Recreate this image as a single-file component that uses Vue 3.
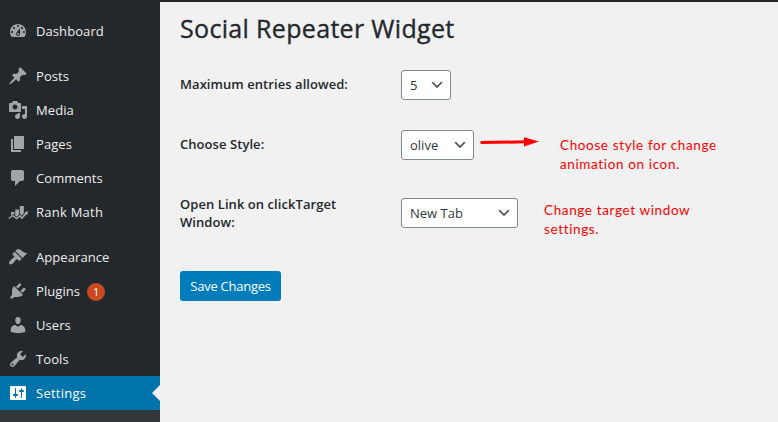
<script setup>
const groups = [
  [
    {
      id: 'dashboard',
      label: 'Dashboard',
      path: 'M3.76 16h12.48c1.1-1.37 1.76-3.11 1.76-5 0-4.42-3.58-8-8-8s-8 3.58-8 8c0 1.89.66 3.63 1.76 5zM10 4c.55 0 1 .45 1 1s-.45 1-1 1-1-.45-1-1 .45-1 1-1zM6 6c.55 0 1 .45 1 1s-.45 1-1 1-1-.45-1-1 .45-1 1-1zm8 0c.55 0 1 .45 1 1s-.45 1-1 1-1-.45-1-1 .45-1 1-1zm-5.37 5.55L12 7v6c0 1.1-.9 2-2 2s-2-.9-2-2c0-.57.24-1.08.63-1.45zM4 10c.55 0 1 .45 1 1s-.45 1-1 1-1-.45-1-1 .45-1 1-1zm12 0c.55 0 1 .45 1 1s-.45 1-1 1-1-.45-1-1 .45-1 1-1zm-5 3c0-.55-.45-1-1-1s-1 .45-1 1 .45 1 1 1 1-.45 1-1z',
    },
  ],
  [
    {
      id: 'posts',
      label: 'Posts',
      path: 'M10.44 3.02l1.82-1.82 6.36 6.35-1.83 1.82c-1.05-.68-2.48-.57-3.41.36l-.75.75c-.92.93-1.04 2.35-.35 3.41l-1.83 1.82-2.41-2.41-2.8 2.79c-.42.42-3.38 2.71-3.8 2.29s1.86-3.39 2.28-3.81l2.79-2.79L4.1 9.36l1.83-1.82c1.05.69 2.48.57 3.4-.36l.75-.75c.93-.92 1.05-2.35.36-3.41z',
    },
    {
      id: 'media',
      label: 'Media',
      path: 'M13 11V4c0-.55-.45-1-1-1h-1.67L9 1H5L3.67 3H2c-.55 0-1 .45-1 1v7c0 .55.45 1 1 1h10c.55 0 1-.45 1-1zM7 4.5c1.38 0 2.5 1.12 2.5 2.5S8.38 9.5 7 9.5 4.5 8.38 4.5 7 5.62 4.5 7 4.5zM14 6h5v10.5c0 1.38-1.12 2.5-2.5 2.5S14 17.88 14 16.5s1.12-2.5 2.5-2.5c.17 0 .34.02.5.05V9h-3V6zm-4 8.05V13h2v3.5c0 1.38-1.12 2.5-2.5 2.5S7 17.88 7 16.5 8.12 14 9.5 14c.17 0 .34.02.5.05z',
    },
    { id: 'pages', label: 'Pages', path: 'M6 15V2h10v13H6zm-1 1h8v2H3V5h2v11z' },
    {
      id: 'comments',
      label: 'Comments',
      path: 'M5 2h9c1.1 0 2 .9 2 2v7c0 1.1-.9 2-2 2h-2l-5 5v-5H5c-1.1 0-2-.9-2-2V4c0-1.1.9-2 2-2z',
    },
    {
      id: 'rank-math',
      label: 'Rank Math',
      path: 'M3 10h3.4v3.2L4.7 12 3 13.6zM7.2 7.4h3.8v5.2l-2.2 2.2-1.6-1.1zM11.8 4h4v7.2l-2 2.6-2-2.3zM.3 16l4.3-3.2 4.2 3 2.9-3 2.2 2.3 3.3-4.3-1-.6 3.8-.9-.5 3.7-1-.8-4.5 5-2.4-2.2-2.7 2.5-4.3-2.9-3.4 2.4z',
    },
  ],
  [
    {
      id: 'appearance',
      label: 'Appearance',
      path: 'M14.48 11.06L7.41 3.99l1.5-1.5c.5-.56 2.3-.47 3.51.32 1.21.8 1.43 1.28 2.91 2.1 1.18.64 2.45 1.26 4.45.85zm-.71.71L6.7 4.7 4.93 6.47c-.39.39-.39 1.02 0 1.41l1.06 1.06c.39.39.39 1.03 0 1.42-.6.6-1.43 1.11-2.21 1.69-.35.26-.7.53-1.01.84C1.43 14.23.4 16.08 1.4 17.07c.99 1 2.84-.03 4.18-1.36.31-.31.58-.66.85-1.02.57-.78 1.08-1.61 1.69-2.21.39-.39 1.02-.39 1.41 0l1.06 1.06c.39.39 1.02.39 1.41 0z',
    },
    {
      id: 'plugins',
      label: 'Plugins',
      badge: 1,
      path: 'M13.11 4.36L9.87 7.6 8 5.73l3.24-3.24c.35-.34 1.05-.2 1.56.32.52.51.66 1.21.31 1.55zm-8 1.77l.91-1.12 9.01 9.01-1.19.84c-.71.71-2.63 1.16-3.82 1.16H6.14L4.9 17.26c-.59.59-1.54.59-2.12 0-.59-.58-.59-1.53 0-2.12l1.24-1.24v-3.88c0-1.13.4-3.19 1.09-3.89zm7.26 3.97l3.24-3.24c.34-.35 1.04-.21 1.55.31.52.51.66 1.21.31 1.55l-3.24 3.25z',
    },
    {
      id: 'users',
      label: 'Users',
      path: 'M10 9.25c-2.27 0-2.73-3.44-2.73-3.44C7 4.02 7.82 2 9.97 2c2.16 0 2.98 2.02 2.71 3.81 0 0-.41 3.44-2.68 3.44zm0 2.57L12.72 10c2.39 0 4.52 2.33 4.52 4.53v2.49s-3.65 1.13-7.24 1.13c-3.65 0-7.24-1.13-7.24-1.13v-2.49c0-2.25 1.94-4.48 4.47-4.48z',
    },
    {
      id: 'tools',
      label: 'Tools',
      path: 'M16.68 9.77c-1.34 1.34-3.3 1.67-4.95.99l-5.41 6.52c-.99.99-2.59.99-3.58 0s-.99-2.59 0-3.57l6.52-5.42c-.68-1.65-.35-3.61.99-4.95 1.28-1.28 3.12-1.62 4.72-1.06l-2.89 2.89 2.82 2.82 2.86-2.87c.53 1.58.18 3.39-1.08 4.65zM3.81 16.21c.4.39 1.04.39 1.43 0 .4-.4.4-1.04 0-1.43-.39-.4-1.03-.4-1.43 0-.39.39-.39 1.03 0 1.43z',
    },
    {
      id: 'settings',
      label: 'Settings',
      active: true,
      path: 'M18 16V4c0-.55-.45-1-1-1H3c-.55 0-1 .45-1 1v12c0 .55.45 1 1 1h14c.55 0 1-.45 1-1zM8 11h1c.55 0 1 .45 1 1s-.45 1-1 1H8v1.5c0 .28-.22.5-.5.5s-.5-.22-.5-.5V13H6c-.55 0-1-.45-1-1s.45-1 1-1h1V5.5c0-.28.22-.5.5-.5s.5.22.5.5V11zm5-2h-1c-.55 0-1-.45-1-1s.45-1 1-1h1V5.5c0-.28.22-.5.5-.5s.5.22.5.5V7h1c.55 0 1 .45 1 1s-.45 1-1 1h-1v5.5c0 .28-.22.5-.5.5s-.5-.22-.5-.5V9z',
    },
  ],
]

const fields = [
  { id: 'max', label: ['Maximum entries allowed:'], value: '5' },
  {
    id: 'style',
    label: ['Choose Style:'],
    value: 'olive',
    arrow: true,
    note: ['Choose style for change', 'animation on icon.'],
  },
  {
    id: 'target',
    label: ['Open Link on clickTarget', 'Window:'],
    value: 'New Tab',
    note: ['Change target window', 'settings.'],
  },
]
</script>

<template>
  <div class="screen">
    <div class="topbar"></div>
    <div class="body">
      <nav class="sidebar">
        <ul v-for="(group, i) in groups" :key="i" class="group">
          <li v-for="item in group" :key="item.id" class="item" :class="[item.id, { active: item.active }]">
            <svg class="icon" viewBox="0 0 20 20"><path :d="item.path" /></svg>
            <span class="name">{{ item.label }}</span>
            <span v-if="item.badge" class="badge">{{ item.badge }}</span>
          </li>
        </ul>
        <div class="submenu"></div>
      </nav>
      <main class="content">
        <h1><span>Social Repeater Widget</span></h1>
        <div v-for="f in fields" :key="f.id" class="row" :class="'row-' + f.id">
          <label class="label">
            <span v-for="line in f.label" :key="line" class="line">{{ line }}</span>
          </label>
          <div class="select">
            <span>{{ f.value }}</span>
            <svg viewBox="0 0 20 20" class="chevron"><path d="M5 6l5 5 5-5 2 1-7 7-7-7 2-1z" /></svg>
          </div>
          <svg v-if="f.arrow" class="arrow" viewBox="0 0 60 12">
            <path d="M1.8 6.6L46 5.8" />
            <polygon points="44,1.2 59,5.6 44,10.4" />
          </svg>
          <p v-if="f.note" class="note">
            <span v-for="line in f.note" :key="line" class="line">{{ line }}</span>
          </p>
        </div>
        <button class="save" type="button"><span>Save Changes</span></button>
      </main>
    </div>
  </div>
</template>

<style>
body {
  margin: 0;
  overflow: hidden;
}
</style>

<style scoped>
.screen {
  width: 778px;
  height: 422px;
  display: flex;
  flex-direction: column;
  overflow: hidden;
  background: #f1f1f1;
  font-family: "Open Sans", "Noto Sans", sans-serif;
  font-size: 13px;
  color: #23282d;
}
.topbar {
  height: 2px;
  background: #23282d;
}
.body {
  flex: 1;
  display: flex;
}
.sidebar {
  width: 160px;
  box-sizing: border-box;
  padding-top: 12px;
  display: flex;
  flex-direction: column;
  background: #23282d;
}
.group {
  list-style: none;
  margin: 0 0 11px;
  padding: 0;
}
.group:last-of-type {
  margin-bottom: 0;
}
.item {
  position: relative;
  height: 34px;
  padding-left: 8px;
  display: flex;
  align-items: center;
  color: #eee;
}
.icon {
  width: 20px;
  height: 20px;
  margin-right: 8px;
  fill: #a0a5aa;
}
.name {
  line-height: 18px;
  letter-spacing: 0.08px;
}
.rank-math .name,
.settings .name {
  letter-spacing: 0.25px;
}
.badge {
  width: 18px;
  height: 18px;
  margin: 2px 0 0 7px;
  border-radius: 9px;
  background: #ca4a1f;
  color: #fff;
  font-size: 11px;
  line-height: 18px;
  text-align: center;
}
.active {
  background: #0073aa;
  color: #fff;
}
.active .icon {
  fill: #fff;
}
.active::after {
  content: "";
  position: absolute;
  top: 9px;
  right: 0;
  border: 8px solid transparent;
  border-right-color: #f1f1f1;
  border-left-width: 0;
}
.submenu {
  flex: 1;
  background: #32373c;
}
.content {
  flex: 1;
  padding: 10px 0 0 20px;
}
h1 {
  margin: 0;
  height: 34px;
  line-height: 33px;
  font-size: 25px;
  font-weight: 400;
  letter-spacing: 0.33px;
  -webkit-text-stroke: 0.35px #23282d;
}
.row {
  display: flex;
  align-items: flex-start;
}
.row-max {
  margin-top: 24px;
  height: 60px;
}
.row-style {
  height: 68px;
}
.row-target {
  height: 73px;
}
.label {
  width: 221px;
  padding-top: 5px;
  font-weight: 600;
  line-height: 18px;
  letter-spacing: 0.06px;
}
.row-target .label {
  padding-top: 0;
  margin-top: -3px;
}
.line {
  display: block;
  white-space: nowrap;
}
.select {
  box-sizing: border-box;
  height: 30px;
  padding: 0 3px 0 8px;
  display: flex;
  align-items: center;
  justify-content: space-between;
  border: 1px solid #7e8993;
  border-radius: 3px;
  background: #fff;
  color: #32373c;
  font-size: 13px;
}
.row-max .select {
  width: 50px;
}
.row-style .select {
  width: 73px;
}
.row-target .select {
  width: 117px;
}
.chevron {
  width: 16px;
  height: 16px;
  margin-right: 2px;
  fill: #555;
}
.arrow {
  width: 60px;
  height: 12px;
  margin: 6px 0 0 6px;
  fill: #f00;
}
.arrow path {
  stroke: #f00;
  stroke-width: 3;
  stroke-linecap: round;
}
.note {
  margin: 6px 0 0 20px;
  color: #f00;
  font-family: Lato, "Open Sans", sans-serif;
  font-size: 13.5px;
  line-height: 19px;
  letter-spacing: 0.63px;
}
.row-target .note {
  margin: 3px 0 0 26px;
}
.save {
  width: 101px;
  height: 30px;
  padding: 0;
  border: 0;
  border-radius: 3px;
  background: #007cba;
  color: #fff;
  font: 13px/30px "Open Sans", "Noto Sans", sans-serif;
  letter-spacing: -0.25px;
}
</style>
